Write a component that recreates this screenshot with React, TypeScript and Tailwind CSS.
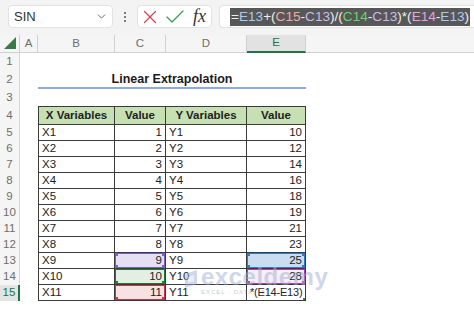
import React from 'react';
import { ChevronDown, X, Check } from 'lucide-react';

type Corner = 'tl' | 'tr' | 'bl' | 'br';

const cornerPos: Record<Corner, string> = {
  tl: '-top-[3px] -left-[3px]',
  tr: '-top-[3px] -right-[3px]',
  bl: '-bottom-[3px] -left-[3px]',
  br: '-bottom-[3px] -right-[3px]',
};

// coloured reference box drawn over a cell (formula edit mode)
const RefBox = ({ border, dot, corners }: { border: string; dot: string; corners: Corner[] }) => (
  <div className={`absolute -inset-[1px] pointer-events-none ${border}`}>
    {corners.map((c) => (
      <span key={c} className={`absolute w-[5px] h-[5px] ${cornerPos[c]} ${dot}`} />
    ))}
  </div>
);

const data = [
  { x: 'X1', xv: 1, y: 'Y1', yv: '10' },
  { x: 'X2', xv: 2, y: 'Y2', yv: '12' },
  { x: 'X3', xv: 3, y: 'Y3', yv: '14' },
  { x: 'X4', xv: 4, y: 'Y4', yv: '16' },
  { x: 'X5', xv: 5, y: 'Y5', yv: '18' },
  { x: 'X6', xv: 6, y: 'Y6', yv: '19' },
  { x: 'X7', xv: 7, y: 'Y7', yv: '21' },
  { x: 'X8', xv: 8, y: 'Y8', yv: '23' },
  { x: 'X9', xv: 9, y: 'Y9', yv: '25' },
  { x: 'X10', xv: 10, y: 'Y10', yv: '28' },
  { x: 'X11', xv: 11, y: 'Y11', yv: '' },
];

const RowHead = ({ n, active }: { n: number; active?: boolean }) => (
  <div
    className={
      active
        ? 'flex items-center justify-center bg-[#e4e4e4] border-r-2 border-[#217346] text-[#217346] text-[11.5px]'
        : 'flex items-center justify-center bg-[#f5f5f5] border-r border-[#d6d6d6] text-[#6e6e6e] text-[11.5px]'
    }
  >
    {n}
  </div>
);

const Formula = () => (
  <span className="bg-[#575757] px-[1px] leading-[18px] text-[13.6px] text-[#eeeeee]">
    =<span className="text-[#a9c9f2]">E13</span>+(<span className="text-[#f3a7a7]">C15</span>-
    <span className="text-[#cdb8ee]">C13</span>)/(<span className="text-[#63d866]">C14</span>-
    <span className="text-[#cdb8ee]">C13</span>)*(<span className="text-[#ec9fe3]">E14</span>-
    <span className="text-[#a9c9f2]">E13</span>)
  </span>
);

const App = () => {
  const cell = 'relative flex items-center px-[3px] border-r border-b border-[#3a3a3a] overflow-hidden whitespace-nowrap';

  return (
    <div className="relative w-[474px] h-[311px] overflow-hidden bg-white font-['Liberation_Sans',Arial,sans-serif] text-[#222]">
      {/* formula bar */}
      <div className="h-[35px] bg-[#f3f3f3] flex items-start pt-[5px]">
        <div className="ml-[8px] w-[105px] h-[23px] bg-white rounded-[4px] border border-[#e2e2e2] flex items-center justify-between pl-[5px] pr-[4px] text-[13px] text-[#333]">
          <span>SIN</span>
          <ChevronDown className="w-[13px] h-[13px] text-[#555]" strokeWidth={1.6} />
        </div>
        <div className="w-[24px] h-[23px] flex flex-col items-center justify-center gap-[2px]">
          <span className="w-[2px] h-[2px] bg-[#555] rounded-full" />
          <span className="w-[2px] h-[2px] bg-[#555] rounded-full" />
          <span className="w-[2px] h-[2px] bg-[#555] rounded-full" />
        </div>
        <div className="w-[75px] h-[23px] bg-white rounded-[4px] border border-[#e2e2e2] flex items-center pl-[1px]">
          <X className="w-[22px] h-[22px] text-[#d9414a]" strokeWidth={1.3} />
          <Check className="w-[24px] h-[24px] ml-[2px] text-[#3f9a55]" strokeWidth={1.3} />
          <span className="ml-[6px] font-['Liberation_Serif',serif] italic text-[18px] leading-none text-[#333] -mt-[2px]">fx</span>
        </div>
        <div className="ml-[7px] flex-1 h-[23px] bg-white rounded-l-[4px] border border-r-0 border-[#e2e2e2] flex items-center pl-[10px] overflow-hidden whitespace-nowrap">
          <Formula />
        </div>
      </div>

      {/* sheet */}
      <div className="grid grid-cols-[20px_18px_77px_51px_81px_59px_1fr] grid-rows-[18px_18px_18px_17px_19px_16px_16px_16px_16px_16px_16px_16px_16px_16px_16px_16px] text-[11.5px]">
        {/* column headers */}
        <div className="bg-[#f5f5f5] border-b border-r border-[#d0d0d0] flex items-end justify-end pr-[3px] pb-[3px]">
          <svg width="12" height="12" viewBox="0 0 12 12">
            <polygon points="12,0 12,12 0,12" fill="#3b7a46" />
          </svg>
        </div>
        {['A', 'B', 'C', 'D'].map((c) => (
          <div key={c} className="bg-[#f5f5f5] border-b border-r border-[#d0d0d0] flex items-center justify-center text-[11.5px] text-[#6e6e6e]">
            {c}
          </div>
        ))}
        <div className="bg-[#e2e2e2] border-b-2 border-r border-b-[#217346] border-r-[#d0d0d0] flex items-center justify-center text-[11.5px] text-[#217346]">
          E
        </div>
        <div className="bg-[#f5f5f5] border-b border-[#d0d0d0]" />

        {/* row 1 */}
        <RowHead n={1} />
        <div className="col-span-6" />

        {/* row 2 title */}
        <RowHead n={2} />
        <div />
        <div className="col-span-4 border-b-2 border-[#8eaadb] flex items-center justify-center font-bold text-[12.5px] text-[#1a1a1a]">
          Linear Extrapolation
        </div>
        <div />

        {/* row 3 */}
        <RowHead n={3} />
        <div className="col-span-6" />

        {/* row 4 header */}
        <RowHead n={4} />
        <div />
        {['X Variables', 'Value', 'Y Variables', 'Value'].map((h, i) => (
          <div
            key={h + i}
            className={`flex items-center justify-center bg-[#c6e0b4] font-bold border-t border-r border-b border-[#3a3a3a] ${i === 0 ? 'border-l' : ''}`}
          >
            {h}
          </div>
        ))}
        <div />

        {/* data rows */}
        {data.map((r, i) => {
          const n = i + 5;
          return (
            <React.Fragment key={r.x}>
              <RowHead n={n} active={n === 15} />
              <div />
              <div className={`${cell} border-l`}>{r.x}</div>
              <div
                className={`${cell} justify-end ${
                  n === 13 ? 'bg-[#e5dff3]' : n === 14 ? 'bg-[#e3efe1]' : n === 15 ? 'bg-[#f6e2e3]' : ''
                }`}
              >
                <span className="relative">{r.xv}</span>
                {n === 13 && <RefBox border="border-2 border-[#7f5fbf]" dot="bg-[#7f5fbf]" corners={['tl', 'tr', 'bl', 'br']} />}
                {n === 14 && <RefBox border="border-2 border-[#1f7a35]" dot="bg-[#1f7a35]" corners={['bl', 'br']} />}
                {n === 15 && <RefBox border="border-2 border-[#c23a4a]" dot="bg-[#c23a4a]" corners={['bl', 'br']} />}
              </div>
              <div className={cell}>{r.y}</div>
              <div
                className={`${cell} ${n === 15 ? 'justify-start px-[2px]' : 'justify-end'} ${
                  n === 13 ? 'bg-[#c9dcf2]' : n === 14 ? 'bg-[#f8eef6]' : ''
                }`}
              >
                {n === 15 ? (
                  <span className="text-[11px] tracking-[-0.2px]">*(E14-E13)</span>
                ) : (
                  <span className="relative">{r.yv}</span>
                )}
                {n === 13 && <RefBox border="border-2 border-[#2f7cc6]" dot="bg-[#2f7cc6]" corners={['tl', 'tr', 'bl', 'br']} />}
                {n === 14 && <RefBox border="border-2 border-[#b53ba6]" dot="bg-[#b53ba6]" corners={['bl', 'br']} />}
                {n === 15 && <RefBox border="border border-dashed border-[#2f8a42]" dot="bg-[#2f8a42]" corners={['br']} />}
              </div>
              <div />
            </React.Fragment>
          );
        })}
      </div>

      {/* watermark */}
      <div className="absolute left-[184px] top-[266px] flex items-start gap-[3px] opacity-50 pointer-events-none">
        <svg width="14" height="18" viewBox="0 0 14 18" className="mt-[4px]">
          <path d="M1 4 L13 0 L13 14 L1 18 Z" fill="#9fb3d8" />
          <path d="M4 7 L10 5 L10 11 L4 13 Z" fill="#d8e0f0" />
        </svg>
        <div className="flex flex-col items-start">
          <span className="text-[24px] leading-[22px] font-bold text-[#9fb0d4] tracking-[0.5px]">exceldemy</span>
          <span className="text-[6px] leading-[8px] text-[#8b98b5] tracking-[1px]">EXCEL · DATA · BI</span>
        </div>
      </div>
    </div>
  );
};

export default App;
